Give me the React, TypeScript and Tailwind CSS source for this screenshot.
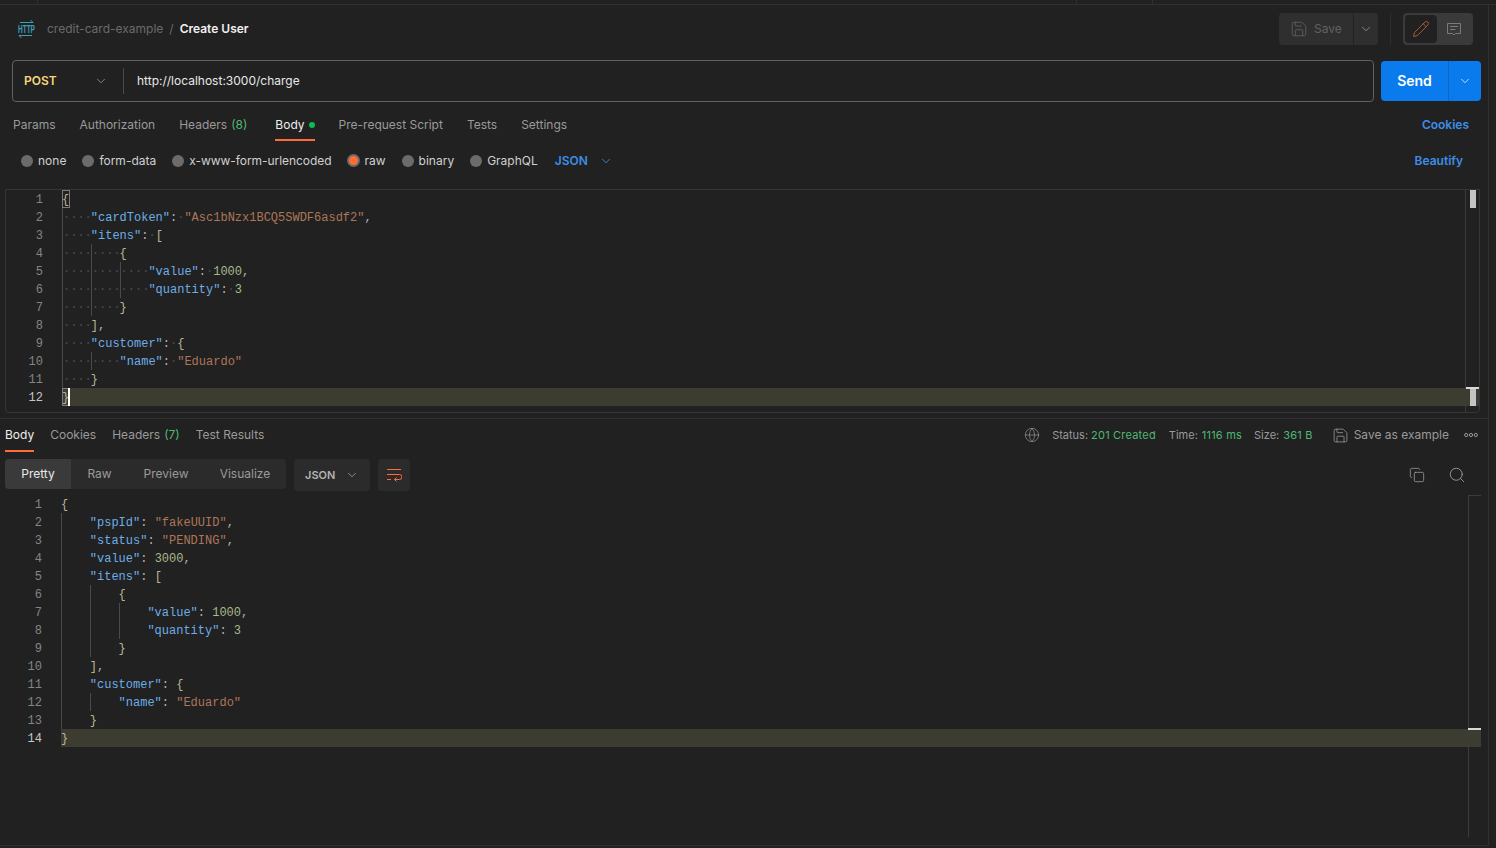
import { ChevronDown, Copy, Globe, Pencil, Save, Search } from "lucide-react";

type Kind = "key" | "str" | "num" | "pun" | "br";
type Tok = [Kind, string];
type Line = { indent: number; toks: Tok[] };

const colors: Record<Kind, string> = {
  key: "text-[#6caee6]",
  str: "text-[#ad7659]",
  num: "text-[#a8b98c]",
  pun: "text-[#b3b3b3]",
  br: "text-[#bdb595]",
};

const requestLines: Line[] = [
  { indent: 0, toks: [["br", "{"]] },
  { indent: 1, toks: [["key", '"cardToken"'], ["pun", ": "], ["str", '"Asc1bNzx1BCQ5SWDF6asdf2"'], ["pun", ","]] },
  { indent: 1, toks: [["key", '"itens"'], ["pun", ": "], ["br", "["]] },
  { indent: 2, toks: [["br", "{"]] },
  { indent: 3, toks: [["key", '"value"'], ["pun", ": "], ["num", "1000"], ["pun", ","]] },
  { indent: 3, toks: [["key", '"quantity"'], ["pun", ": "], ["num", "3"]] },
  { indent: 2, toks: [["br", "}"]] },
  { indent: 1, toks: [["br", "]"], ["pun", ","]] },
  { indent: 1, toks: [["key", '"customer"'], ["pun", ": "], ["br", "{"]] },
  { indent: 2, toks: [["key", '"name"'], ["pun", ": "], ["str", '"Eduardo"']] },
  { indent: 1, toks: [["br", "}"]] },
  { indent: 0, toks: [["br", "}"]] },
];

const responseLines: Line[] = [
  { indent: 0, toks: [["br", "{"]] },
  { indent: 1, toks: [["key", '"pspId"'], ["pun", ": "], ["str", '"fakeUUID"'], ["pun", ","]] },
  { indent: 1, toks: [["key", '"status"'], ["pun", ": "], ["str", '"PENDING"'], ["pun", ","]] },
  { indent: 1, toks: [["key", '"value"'], ["pun", ": "], ["num", "3000"], ["pun", ","]] },
  { indent: 1, toks: [["key", '"itens"'], ["pun", ": "], ["br", "["]] },
  { indent: 2, toks: [["br", "{"]] },
  { indent: 3, toks: [["key", '"value"'], ["pun", ": "], ["num", "1000"], ["pun", ","]] },
  { indent: 3, toks: [["key", '"quantity"'], ["pun", ": "], ["num", "3"]] },
  { indent: 2, toks: [["br", "}"]] },
  { indent: 1, toks: [["br", "]"], ["pun", ","]] },
  { indent: 1, toks: [["key", '"customer"'], ["pun", ": "], ["br", "{"]] },
  { indent: 2, toks: [["key", '"name"'], ["pun", ": "], ["str", '"Eduardo"']] },
  { indent: 1, toks: [["br", "}"]] },
  { indent: 0, toks: [["br", "}"]] },
];

function HttpLogo() {
  return (
    <svg width="20" height="20" viewBox="0 0 20 20" fill="none" className="text-[#3f9fb5]">
      <path d="M4 3.5h13M14.5 1 17 3.5M16 16.5H3M5.5 19 3 16.5" stroke="currentColor" strokeWidth="1" />
      <text transform="translate(2 14) scale(1 1.6)" fontSize="6.5" fontWeight="600" fontFamily="Liberation Sans, sans-serif" fill="currentColor">
        HTTP
      </text>
    </svg>
  );
}

function CommentIcon() {
  return (
    <svg width="16" height="16" viewBox="0 0 16 16" fill="none" stroke="currentColor" strokeWidth="1">
      <path d="M1.5 2.5h13v10H9.5L8 14l-1.5-1.5h-5z" />
      <path d="M4 5.5h8M4 8.5h5.5" />
    </svg>
  );
}

function WrapIcon() {
  return (
    <svg width="16" height="14" viewBox="0 0 16 14" fill="none" stroke="#ff6c37" strokeWidth="1">
      <path d="M1 1.5h14M1 6.5h12.5a1.8 1.8 0 0 1 0 5H8.5M10.5 9.5l-2 2 2 2M1 11.5h4" />
    </svg>
  );
}

function Tab({ label, count, active, dot }: { label: string; count?: string; active?: boolean; dot?: boolean }) {
  return (
    <div className={`relative flex h-full items-center ${active ? "text-[#eeeeee]" : "text-[#9a9a9a]"}`}>
      {label}
      {count && <span className="ml-1 text-[#4fb873]">{count}</span>}
      {dot && <span className="ml-1 size-[6px] rounded-full bg-[#0cbb52]" />}
      {active && <span className="absolute right-0 -bottom-px left-0 h-[2px] bg-[#ff6c37]" />}
    </div>
  );
}

function Radio({ label, active }: { label: string; active?: boolean }) {
  return (
    <div className="flex items-center gap-[5px] text-[#d0d0d0]">
      {active ? (
        <span className="flex size-[13px] items-center justify-center rounded-full bg-[#6b6b6b]">
          <span className="size-[9px] rounded-full bg-[#ff6c37]" />
        </span>
      ) : (
        <span className="size-[12px] rounded-full bg-[#6b6b6b]" />
      )}
      {label}
    </div>
  );
}

function CodeLine({ line, n, last, dots }: { line: Line; n: number; last: boolean; dots: boolean }) {
  return (
    <div className={`flex h-[18px] items-center ${last ? "bg-[#3c3c31]" : ""}`}>
      <span className={`absolute left-0 mt-px w-[37px] text-right ${last ? "text-[#c6c6c6]" : "text-[#858585]"}`}>{n}</span>
      {Array.from({ length: line.indent }).map((_, i) => (
        <span
          key={i}
          className={`h-[18px] w-[28.8px] shrink-0 overflow-hidden border-l border-[#4a4a4a] pt-px leading-[18px] text-[#4d4d4d] ${i === 0 && dots ? "border-[#3a3a3a]" : ""}`}
        >
          {dots ? "····" : ""}
        </span>
      ))}
      <span className="whitespace-pre pt-[2px]">
        {line.toks.map(([kind, text], i) =>
          kind === "pun" && text === ": " && dots ? (
            <span key={i}>
              <span className={colors.pun}>:</span>
              <span className="text-[#4d4d4d]">·</span>
            </span>
          ) : (
            <span key={i} className={colors[kind]}>{text}</span>
          ),
        )}
      </span>
    </div>
  );
}

export default function App() {
  return (
    <div className="flex h-[848px] w-[1496px] flex-col overflow-hidden bg-[#212121] font-['Inter',sans-serif] text-xs">
      <div className="flex h-[5px] shrink-0 border-b border-[#303030]">
        <div className="ml-[37px] w-[1040px] border-x border-[#303030]" />
        <div className="ml-[75px] w-[335px] border-l border-[#303030]" />
      </div>

      <div className="mb-[2px] flex w-[1489px] flex-1 flex-col border-r border-b border-[#303030]">
        {/* header */}
        <div className="flex h-[55px] shrink-0 items-center pr-[15px] pb-[8px] pl-[16px]">
          <HttpLogo />
          <span className="ml-[11px] text-[#6b6b6b]">credit-card-example</span>
          <span className="mx-[6px] text-[#6b6b6b]">/</span>
          <span className="font-semibold text-[#f0f0f0]">Create User</span>
          <div className="ml-auto flex h-8 items-center">
            <div className="flex h-8 w-[74px] items-center gap-[6px] rounded-l bg-[#2f2f2f] pl-[11px] text-[#616161]">
              <Save size={18} strokeWidth={1.1} />
              Save
            </div>
            <div className="ml-px flex h-8 w-[24px] items-center justify-center rounded-r bg-[#2f2f2f] text-[#a6a6a6]">
              <ChevronDown size={14} strokeWidth={1.25} />
            </div>
            <div className="mx-[12px] h-8 w-px bg-[#2f2f2f]" />
            <div className="flex h-8 w-[70px] items-center rounded bg-[#3a3a3a] p-[2px]">
              <div className="flex h-7 w-[32px] items-center justify-center rounded bg-[#212121] text-[#c8623a]">
                <Pencil size={18} strokeWidth={1.1} />
              </div>
              <div className="flex h-7 w-[34px] items-center justify-center text-[#7a7a7a]">
                <CommentIcon />
              </div>
            </div>
          </div>
        </div>

        {/* url bar */}
        <div className="flex h-[42px] shrink-0 items-center pr-[7px] pl-[12px]">
          <div className="flex h-[42px] w-[1362px] items-center rounded border border-[#616161]">
            <div className="flex h-[26px] w-[111px] items-center justify-between border-r border-[#4a4a4a] pr-[15px] pl-[11px]">
              <span className="font-semibold text-[#f5d77a]">POST</span>
              <ChevronDown size={14} strokeWidth={1.25} className="text-[#a6a6a6]" />
            </div>
            <span className="pl-[13px] text-[#e8e8e8]">http://localhost:3000/charge</span>
          </div>
          <div className="ml-auto flex h-10 w-[100px] rounded bg-[#097bed] text-white">
            <div className="flex w-[68px] items-center justify-center border-r border-[#0a68c7] text-sm font-semibold">Send</div>
            <div className="flex flex-1 items-center justify-center">
              <ChevronDown size={14} strokeWidth={1.25} />
            </div>
          </div>
        </div>

        {/* request tabs */}
        <div className="mt-[8px] flex h-[30px] shrink-0 items-center gap-[24px] pr-[19px] pl-[13px]">
          <Tab label="Params" />
          <Tab label="Authorization" />
          <div className="mr-[4px] h-full">
            <Tab label="Headers" count="(8)" />
          </div>
          <Tab label="Body" active dot />
          <Tab label="Pre-request Script" />
          <Tab label="Tests" />
          <Tab label="Settings" />
          <span className="ml-auto font-semibold text-[#3d8ee8]">Cookies</span>
        </div>

        {/* body types */}
        <div className="flex h-[41px] shrink-0 items-center gap-[16px] pr-[25px] pl-[21px]">
          <Radio label="none" />
          <Radio label="form-data" />
          <div className="-mr-px tracking-[-0.05px]">
            <Radio label="x-www-form-urlencoded" />
          </div>
          <Radio label="raw" active />
          <Radio label="binary" />
          <Radio label="GraphQL" />
          <div className="ml-px flex items-center gap-[11px] font-semibold text-[#3d8ee8]">
            JSON
            <ChevronDown size={14} strokeWidth={1.5} />
          </div>
          <span className="ml-auto font-semibold text-[#3d8ee8]">Beautify</span>
        </div>

        {/* request editor */}
        <div className="relative mt-[8px] mr-[8px] ml-[5px] h-[224px] shrink-0 rounded-b border border-[#363636] pl-[56px] font-['Liberation_Mono',monospace] text-[12px]">
          {requestLines.map((line, i) => (
            <CodeLine key={i} line={line} n={i + 1} last={i === requestLines.length - 1} dots />
          ))}
          <span className="absolute top-0 left-[56px] h-[18px] w-[8px] border border-[#7a7a7a]" />
          <span className="absolute top-[198px] left-[56px] h-[18px] w-[8px] border border-[#7a7a7a]" />
          <span className="absolute top-[198px] left-[62px] h-[18px] w-[2px] bg-white" />
          <span className="absolute top-0 right-0 bottom-0 w-[14px] border-l border-[#3a3a3a]" />
          <span className="absolute top-0 right-[3px] h-[18px] w-[6px] bg-[#c4c4c4]" />
          <span className="absolute top-[198px] right-[3px] h-[18px] w-[6px] bg-[#c4c4c4]" />
          <span className="absolute top-[197px] right-0 h-[2px] w-[13px] bg-[#d8d8d8]" />
        </div>

        <div className="mt-[5px] h-px shrink-0 bg-[#303030]" />

        {/* response tabs */}
        <div className="flex h-[32px] shrink-0 items-center gap-[16px] pr-[10px] pl-[5px]">
          <Tab label="Body" active />
          <Tab label="Cookies" />
          <Tab label="Headers" count="(7)" />
          <Tab label="Test Results" />
          <div className="ml-auto flex items-center text-[11px] text-[#9a9a9a]">
            <Globe size={16} strokeWidth={1} className="mr-[12px]" />
            <span>Status:</span>
            <span className="ml-[3px] tracking-[0.2px] text-[#4fb873]">201 Created</span>
            <span className="ml-[13px]">Time:</span>
            <span className="ml-[4px] tracking-[0.2px] text-[#4fb873]">1116 ms</span>
            <span className="ml-[12px]">Size:</span>
            <span className="ml-[4px] tracking-[0.2px] text-[#4fb873]">361 B</span>
            <Save size={17} strokeWidth={1.1} className="mr-[5px] ml-[19px]" />
            <span className="text-xs">Save as example</span>
            <svg width="14" height="6" viewBox="0 0 14 6" fill="none" stroke="currentColor" className="ml-[15px]">
              <circle cx="2.2" cy="3" r="1.6" />
              <circle cx="7" cy="3" r="1.6" />
              <circle cx="11.8" cy="3" r="1.6" />
            </svg>
          </div>
        </div>

        {/* response toolbar */}
        <div className="mt-[8px] flex h-[32px] shrink-0 items-start pr-[22px] pl-[5px]">
          <div className="flex h-[30px] w-[281px] items-center rounded bg-[#2b2b2b] text-[#9a9a9a]">
            <div className="flex h-full w-[66px] items-center justify-center rounded-l bg-[#3a3a3a] text-[#e8e8e8]">Pretty</div>
            <div className="w-[57px] text-center">Raw</div>
            <div className="w-[76px] text-center">Preview</div>
            <div className="w-[82px] text-center">Visualize</div>
          </div>
          <div className="ml-[8px] flex h-8 w-[76px] items-center justify-between rounded bg-[#2b2b2b] pr-[11px] pl-[11px] text-[11px] text-[#b3b3b3]">
            <span className="font-semibold">JSON</span>
            <ChevronDown size={14} strokeWidth={1.25} />
          </div>
          <div className="ml-[8px] flex size-8 items-center justify-center rounded bg-[#2b2b2b]">
            <WrapIcon />
          </div>
          <div className="ml-auto flex h-8 items-center gap-[23px] text-[#a6a6a6]">
            <Copy size={16} strokeWidth={1.1} />
            <Search size={18} strokeWidth={1.1} />
          </div>
        </div>

        {/* response editor */}
        <div className="relative mt-[4px] mr-[7px] ml-[5px] flex-1 pl-[56px] font-['Liberation_Mono',monospace] text-[12px]">
          {responseLines.map((line, i) => (
            <CodeLine key={i} line={line} n={i + 1} last={i === responseLines.length - 1} dots={false} />
          ))}
          <span className="absolute top-0 right-[12px] bottom-[8px] w-px bg-[#3c3c3c]" />
          <span className="absolute top-0 right-0 h-px w-[13px] bg-[#3c3c3c]" />
          <span className="absolute top-[233px] right-0 h-[2px] w-[13px] bg-[#d8d8d8]" />
        </div>
      </div>
    </div>
  );
}
